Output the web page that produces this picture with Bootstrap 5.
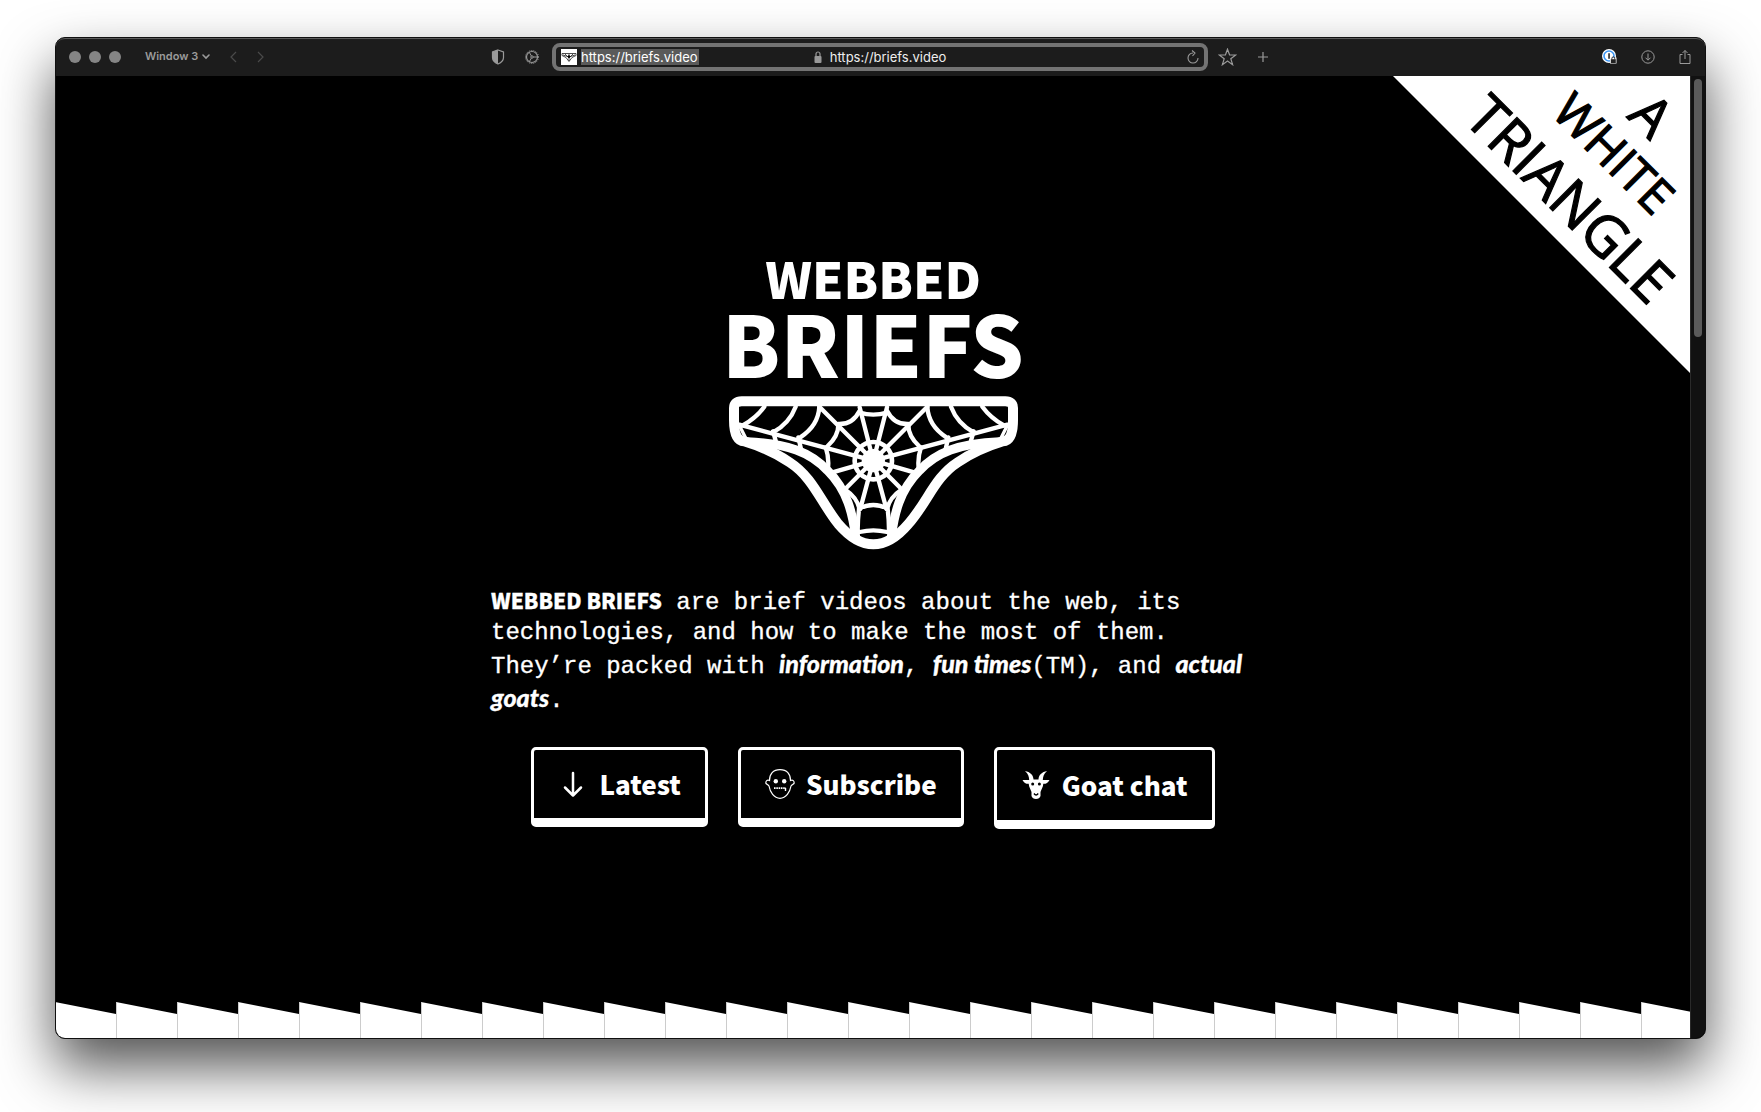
<!DOCTYPE html>
<html lang="en">
<head>
<meta charset="utf-8">
<meta name="viewport" content="width=device-width, initial-scale=1">
<title>Webbed Briefs</title>
<link rel="stylesheet" href="https://cdn.jsdelivr.net/npm/bootstrap@5.3.0/dist/css/bootstrap.min.css">
<style>
  body { background: #fff; font-family: "Noto Sans CJK SC", "Lato", sans-serif; }
  .desktop { min-height: 100vh; padding: 37px 55px 73px; }
  .browser { background: #000; border: 1px solid #101010; border-radius: 10px; box-shadow: 0 28px 56px rgba(0,0,0,.68); color: #fff; }
  .toolbar { height: 38px; background: #1c1c1c; border-top: 1px solid #5a5a5a; font-family: "Inter", sans-serif; color: #9a9a9a; border-radius: 9px 9px 0 0; padding: 0 14px 2px 13px; }
  .toolbar button { background: none; border: 0; padding: 0; color: inherit; display: flex; align-items: center; }
  .toolbar .faint { color: #4a4a4a; }
  .side { flex: 1 1 0; }
  .middle { flex: 0 1 778px; }
  .light { width: 12px; height: 12px; border-radius: 50%; background: #858585 !important; }
  .win-name { font-size: 11px; font-weight: 600; }
  .address { height: 28px; border: 4px solid #737373; border-radius: 8px; color: #eee; font-size: 13px; line-height: 16px; padding: 0 5px; margin: 0 10px 0 13px; }
  .address input { width: 118px; height: 16px; border: 0; padding: 0; background: #5a5a5a; color: #fff; outline: 0; }
  .address button { color: #9a9a9a; }
  .gap-tools { margin-left: 20px; }
  .viewport-area { overflow: hidden; border-radius: 0 0 9px 9px; }
  .page-body { background: #000; }
  .scroll-track { width: 15px; background: #111; border-left: 1px solid #2a2a2a; padding: 3px 3px; }
  .scroll-thumb { width: 8px; height: 27%; border-radius: 4px; background: #5a5a5a; }
  .corner { top: 0; right: 0; overflow: visible; font-family: "Open Sans", sans-serif; }
  .hero { padding: 170px 24px 0; }
  .wordmark { font-weight: 900; margin: 0 0 20px; }
  .wordmark .top-word { font-size: 50px; line-height: 62px; }
  .wordmark .main-word { font-size: 84px; line-height: 68px; }
  .intro { font-family: "Courier New", "Liberation Mono", monospace; font-size: 24px; line-height: 30px; width: 100%; max-width: 764px; margin: 35px 0 31px; -webkit-text-stroke: .3px #fff; }
  .intro strong { font-family: "Noto Sans CJK SC", sans-serif; font-size: 21px; font-weight: 900; line-height: 30px; }
  .intro em { font-family: "Lato", sans-serif; font-size: 25px; font-weight: 900; line-height: 30px; font-style: italic; }
  .actions { gap: 30px; }
  .btn-brief { --bs-btn-color: #fff; --bs-btn-hover-color: #fff; --bs-btn-hover-bg: #222; --bs-btn-hover-border-color: #fff; border: 3px solid #fff; border-bottom-width: 9px; border-radius: 5px; padding: 16px 24px; font-size: 26px; line-height: 36px; font-weight: 900; gap: 11px; }
  .btn-brief.taller { padding: 17px 24px; }
</style>
<script src="https://cdn.jsdelivr.net/npm/bootstrap@5.3.0/dist/js/bootstrap.bundle.min.js"></script>
</head>
<body>
<div class="desktop d-flex">
<div class="browser d-flex flex-column flex-fill">
  <header class="toolbar d-flex align-items-center">
    <div class="side d-flex align-items-center">
      <div class="d-flex gap-2">
        <button class="light" aria-label="Close"></button><button class="light" aria-label="Minimise"></button><button class="light" aria-label="Zoom"></button>
      </div>
      <button class="win-name gap-1 ms-4">Window 3
        <svg width="8" height="6" viewBox="0 0 8 6" fill="none" stroke="currentColor" stroke-width="1.6" stroke-linecap="round"><path d="M1 1l3 3 3-3"/></svg></button>
      <button class="faint gap-tools" aria-label="Back"><svg width="7" height="12" viewBox="0 0 7 12" fill="none" stroke="currentColor" stroke-width="1.2"><path d="M6 1L1 6l5 5"/></svg></button>
      <button class="faint gap-tools" aria-label="Forward"><svg width="7" height="12" viewBox="0 0 7 12" fill="none" stroke="currentColor" stroke-width="1.2"><path d="M1 1l5 5-5 5"/></svg></button>
    </div>
    <div class="middle d-flex align-items-center">
      <button aria-label="Privacy report"><svg width="14" height="16" viewBox="0 0 14 16"><path d="M7 1L12.500 3V8.500C12.500 11.500 10 13.700 7 15C4 13.700 1.500 11.500 1.500 8.500V3z" fill="none" stroke="currentColor" stroke-width="1.200"/><path d="M7 1V15C4 13.700 1.500 11.500 1.500 8.500V3z" fill="currentColor"/></svg></button>
      <button class="gap-tools" aria-label="Site settings"><svg width="14" height="14" viewBox="0 0 14 14" fill="none" stroke="currentColor"><circle cx="7" cy="7" r="5.500" stroke-width="1.200"/><circle cx="7" cy="7" r="6.500" stroke-width="1" stroke-dasharray="1 1.040"/><path d="M7 7H12.500M7 7L4.300 2.300M7 7L4.300 11.700" stroke-width="1"/><circle cx="7" cy="7" r="1.200" fill="#1c1c1c"/></svg></button>
      <div class="address d-flex align-items-center flex-fill">
        <div class="side d-flex align-items-center gap-1">
          <svg width="16" height="16" viewBox="0 0 16 16"><path fill="#fff" d="M0 0h16v16H0z"/><path d="M1 4.500H15V6.500L11 8.500L8 12.500L5 8.500L1 6.500zM4 5L8 9L12 5M8 5V12M2 6L8 8L14 6" fill="none" stroke="#222" stroke-width=".800"/><circle cx="8" cy="7.500" r="1.300"/></svg>
          <input type="text" aria-label="Address" value="https://briefs.video">
        </div>
        <div class="d-flex align-items-center gap-2">
          <svg width="8" height="12" viewBox="0 0 8 12"><rect x=".5" y="5" width="7" height="7" rx="1" fill="#999"/><path d="M2 5.500V3a2 2 0 0 1 4 0v2.500" fill="none" stroke="#999" stroke-width="1.200"/></svg>
          <span>https://briefs.video</span>
        </div>
        <div class="side d-flex justify-content-end">
          <button aria-label="Reload"><svg width="12" height="14" viewBox="0 0 12 14" fill="none" stroke="currentColor" stroke-width="1.100"><path d="M6 3a5 5 0 1 0 5 5M5 .500L8 3L5.500 6"/></svg></button>
        </div>
      </div>
      <button aria-label="Bookmark"><svg width="19" height="18" viewBox="0 0 19 18" fill="none" stroke="currentColor" stroke-width="1.200"><path d="M9.500 1.200L11.600 7H17.700L12.800 10.700L14.600 16.700L9.500 13.100L4.400 16.700L6.200 10.700L1.300 7H7.400z"/></svg></button>
      <button class="gap-tools" aria-label="New tab"><svg width="12" height="12" viewBox="0 0 12 12" stroke="currentColor" stroke-width="1.200"><path d="M6 1v10M1 6h10"/></svg></button>
    </div>
    <div class="side d-flex align-items-center justify-content-end gap-4">
      <button aria-label="Passwords"><svg width="15" height="15" viewBox="0 0 15 15"><circle cx="7" cy="7" r="7" fill="#fff"/><circle cx="7" cy="7" r="5" fill="none" stroke="#3b96f5" stroke-width="1.600"/><path d="M6.200 4.200h1.700v5.600H6.200z" fill="#333"/><path d="M8 8.500h6.500v6H8z" fill="#fff"/><path d="M8.800 10.200h5v3.800h-5z" fill="#222"/><path d="M9.900 10.500V9.300a1.400 1.400 0 0 1 2.800 0v1.200" fill="none" stroke="#222"/></svg></button>
      <button aria-label="Downloads"><svg width="14" height="14" viewBox="0 0 14 14" fill="none" stroke="currentColor"><circle cx="7" cy="7" r="6.200"/><path d="M7 3.500v6.500M4.500 7.700L7 10.200L9.500 7.700"/></svg></button>
      <button aria-label="Share"><svg width="12" height="16" viewBox="0 0 12 16" fill="none" stroke="currentColor"><path d="M3.500 5.500h-2.500v9h10v-9H8.500M6 10V1.500M3.500 4L6 1.500L8.500 4"/></svg></button>
    </div>
  </header>

  <div class="viewport-area d-flex flex-fill">
    <main class="page-body position-relative d-flex flex-column flex-fill">
      <svg class="corner position-absolute" width="297" height="297" viewBox="0 0 297 297">
        <path d="M0 0H297V297z" fill="#fff"/>
        <g fill="#000" stroke="#000" stroke-width="1.200">
          <text transform="translate(233 41) rotate(45)" font-size="54">A</text>
          <text transform="translate(157 38) rotate(45)" font-size="48">WHITE</text>
          <text transform="translate(69 44) rotate(45)" font-size="57">TRIANGLE</text>
        </g>
      </svg>

      <div class="hero d-flex flex-column align-items-center flex-fill">
        <h1 class="wordmark text-center">
          <span class="top-word d-block">WEBBED</span>
          <span class="main-word d-block">BRIEFS</span>
        </h1>
        <svg width="289" height="154" viewBox="54 46 867 462" fill="none" stroke="#fff" stroke-linecap="round" stroke-linejoin="round" aria-hidden="true">
          <!-- outline: waistband and the two outer leg curves -->
          <path stroke-width="30" d="M69 82Q69 62 92 62H883Q906 62 906 82V118Q906 180 876 182Q800 205 740 245C670 290 650 365 592 430Q540 491 487 491Q434 491 382 430C330 365 306 290 236 245Q176 205 99 182Q69 180 69 118z"/>
          <!-- leg openings -->
          <path stroke-width="27" d="M108 183C230 188 300 215 350 270C410 330 425 400 434 468M866 183C744 188 675 215 625 270C565 330 550 400 541 468"/>
          <path stroke-width="10" d="M84 132L104 172M890 132L870 172"/>
          <!-- web spokes -->
          <path stroke-width="13" d="M487 240L85 132M487 240L889 132M487 240L325 78M487 240L649 78M487 240L446 80M487 240L528 80M487 240L362 276M487 240L612 276M487 240L402 326M487 240L572 326M487 240L448 384M487 240L526 384"/>
          <!-- web rings -->
          <path stroke-width="13" d="M446 96Q487 108 528 96M382 130Q425 132 446 90M592 130Q549 132 528 90M382 130Q383 165 350 196M592 130Q591 165 624 196M325 78Q322 135 268 170M649 78Q652 135 706 170M254 78Q235 128 186 155M720 78Q739 128 788 155M160 78Q135 112 95 134M814 78Q839 112 879 134M344 200Q356 235 350 270M630 200Q618 235 624 270M262 170L270 205M712 170L704 205M186 152L194 180M788 152L780 180M404 328Q438 350 446 386M570 328Q536 350 528 386M444 384Q487 362 530 384M444 384Q440 420 440 450M530 384Q534 420 534 450M446 454Q487 444 528 454"/>
          <circle cx="487" cy="240" r="26" stroke-width="18" fill="#fff"/>
          <circle cx="487" cy="240" r="56" stroke-width="14"/>
        </svg>

        <p class="intro"><strong>WEBBED BRIEFS</strong> are brief videos about the web, its technologies, and how to make the most of them. They’re packed with <em>information</em>, <em>fun times</em>(TM), and <em>actual goats</em>.</p>

        <nav class="actions d-flex flex-wrap align-items-start justify-content-center">
          <a href="#latest" class="btn btn-brief d-flex align-items-center">
            <svg width="30" height="30" viewBox="0 0 30 30" fill="none" stroke="#fff" stroke-width="2.500" stroke-linecap="round" stroke-linejoin="round"><path d="M15 4V26M7 18.500L15 26.500L23 18.500"/></svg>Latest</a>
          <a href="#subscribe" class="btn btn-brief d-flex align-items-center">
            <svg width="30" height="30" viewBox="0 0 30 30" fill="none" stroke="#fff" stroke-width="1.200"><path d="M15 .700C8 .700 4.500 5 4.500 11.500C2 10.500.800 12 .800 14C1.200 15.500 3 15.500 4 17C5 23 9 29.300 15 29.300S25 23 26 17C27 15.500 28.800 15.500 29.200 14C29.200 12 28 10.500 25.500 11.500C25.500 5 22 .700 15 .700z"/><path stroke-width="1.800" stroke-dasharray="1.600 .7" d="M9 19.200H21"/><path d="M20.500 19v3" stroke-width="1.400"/><circle cx="10.800" cy="12.200" r="2.200" fill="#fff" stroke="none"/><circle cx="19.200" cy="12.200" r="2.200" fill="#fff" stroke="none"/></svg>Subscribe</a>
          <a href="#goat-chat" class="btn btn-brief taller d-flex align-items-center">
            <svg width="30" height="30" viewBox="0 0 30 30"><path fill="#fff" d="M4 1C9 2 12.500 5 12.500 9.500H17.500C17.500 5 21 2 26 1C22.500 4 22 7 21.800 10L28.500 10C27 13.300 24.500 14 22.300 13.800C22 17.500 20.500 19 19.500 22V26Q18.500 29 15 29T10.500 26V22C9.500 19 8 17.500 7.700 13.800C5.500 14 3 13.300 1.500 10L8.200 10C8 7 7.500 4 4 1z"/><circle cx="11.700" cy="14" r="1.500"/><circle cx="18.400" cy="14" r="1.500"/><path d="M13 23.500Q15 26.500 17.200 23.500" fill="none" stroke="#000" stroke-width="1.400"/></svg>Goat chat</a>
        </nav>
      </div>

      <svg class="d-block w-100" height="36" aria-hidden="true">
        <defs><pattern id="teeth" x="-1" y="0" width="61" height="36" patternUnits="userSpaceOnUse"><path d="M0 0L61 12V36H0z" fill="#fff"/><path d="M0 0h1v36H0z" fill="#ccc"/></pattern></defs>
        <rect width="100%" height="36" fill="url(#teeth)"/>
      </svg>
    </main>
    <div class="scroll-track"><div class="scroll-thumb"></div></div>
  </div>
</div>
</div>
</body>
</html>
